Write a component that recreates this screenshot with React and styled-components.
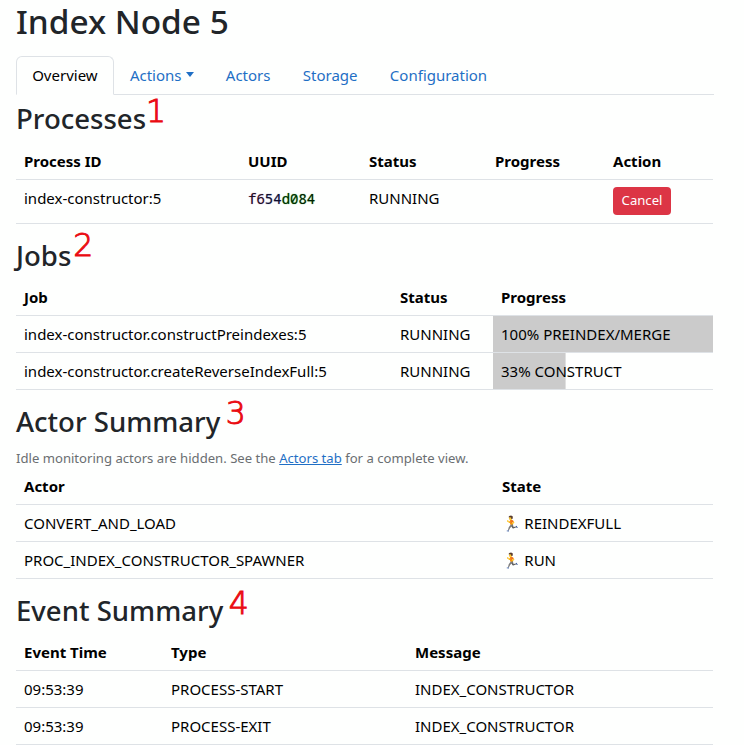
import React from "react";
import styled, { createGlobalStyle } from "styled-components";

const GlobalStyle = createGlobalStyle`
  * { box-sizing: border-box; }
  body {
    margin: 0;
    background: #fefffe;
    color: #212529;
    font-family: "Noto Sans", sans-serif;
    font-size: 15px;
    line-height: 20px;
    overflow: hidden;
  }
`;

const Page = styled.main`
  width: 714px;
  height: 745px;
  padding-left: 16px;
`;

const Title = styled.h1`
  margin: 0;
  height: 56px;
  padding-top: 1px;
  font-size: 33.4px;
  line-height: 40px;
  font-weight: 480;
`;

const Tabs = styled.nav`
  display: flex;
  height: 39px;
  border-bottom: 1px solid #dee2e6;
`;

const Tab = styled.a`
  display: flex;
  align-items: center;
  height: 39px;
  padding: 0 15.17px 2px;
  border: 1px solid ${(p) => (p.$active ? "#dee2e6" : "transparent")};
  border-bottom-color: ${(p) => (p.$active ? "#fefffe" : "transparent")};
  border-radius: 6px 6px 0 0;
  background: ${(p) => (p.$active ? "#fefffe" : "transparent")};
  color: ${(p) => (p.$active ? "#000" : "#1f6fc5")};
  text-decoration: none;
`;

const Caret = styled.span`
  margin-left: 4px;
  border: 4.5px solid transparent;
  border-top: 5px solid currentColor;
  border-bottom: 0;
`;

const Heading = styled.h2`
  display: flex;
  align-items: baseline;
  margin: 0;
  height: ${(p) => p.$height}px;
  padding-top: ${(p) => p.$top}px;
  font-size: 27.55px;
  line-height: 34px;
  font-weight: 500;
`;

const Marker = styled.span`
  margin-left: ${(p) => p.$gap}px;
  position: relative;
  top: -${(p) => p.$rise}px;
  color: #ea0c12;
  font-family: "DejaVu Sans", sans-serif;
  font-size: 31.5px;
  font-weight: 200;
  -webkit-text-stroke: 1px #ea0c12;
`;

const Note = styled.p`
  margin: 0;
  height: 20px;
  color: #6a6e71;
  font-size: 13.12px;
`;

const Link = styled.a`
  color: #1f6fc5;
  text-decoration: underline;
`;

const Table = styled.div`
  width: 697px;
  color: #000;
`;

const Row = styled.div`
  display: grid;
  grid-template-columns: ${(p) => p.$columns};
  height: ${(p) => p.$height || 37}px;
  border-bottom: 1px solid #dee2e6;
  font-weight: ${(p) => (p.$head ? 700 : 400)};
`;

const Cell = styled.div`
  padding: 8px 8px 0;
  white-space: nowrap;
`;

const StateIcon = styled.span`
  margin-right: -0.6px;
`;

const ProgressCell = styled(Cell)`
  background: linear-gradient(#cbcbcb, #cbcbcb) no-repeat 0 0 / ${(p) => p.$value}% 100%;
`;

const Uuid = styled.code`
  font-family: "Noto Sans Mono", "DejaVu Sans Mono", monospace;
  font-size: 14px;
`;

const UuidPart = styled.span`
  color: ${(p) => p.$color};
  text-shadow: 0 0 1px ${(p) => p.$glow};
`;

const CancelButton = styled.button`
  display: block;
  width: 58px;
  height: 28px;
  margin-top: -1px;
  padding: 0 0 1px;
  border: 0;
  border-radius: 4px;
  background: #dc3545;
  color: #fff;
  font: 13.12px/27px "Noto Sans", sans-serif;
`;

const processColumns = "224px 121px 126px 118px 108px";
const jobColumns = "376px 101px 220px";
const actorColumns = "478px 219px";
const eventColumns = "147px 244px 306px";

const HeadRow = ({ columns, labels }) => (
  <Row $columns={columns} $head>
    {labels.map((label) => (
      <Cell key={label}>{label}</Cell>
    ))}
  </Row>
);

const jobs = [
  ["index-constructor.constructPreindexes:5", 100, "PREINDEX/MERGE"],
  ["index-constructor.createReverseIndexFull:5", 33, "CONSTRUCT"],
];
const actors = [
  ["CONVERT_AND_LOAD", "REINDEXFULL"],
  ["PROC_INDEX_CONSTRUCTOR_SPAWNER", "RUN"],
];
const events = ["PROCESS-START", "PROCESS-EXIT"];

export default function App() {
  return (
    <Page>
      <GlobalStyle />
      <Title>Index Node 5</Title>
      <Tabs>
        <Tab $active>Overview</Tab>
        <Tab>Actions<Caret /></Tab>
        <Tab>Actors</Tab>
        <Tab>Storage</Tab>
        <Tab>Configuration</Tab>
      </Tabs>

      <Heading $height={48} $top={6}>Processes<Marker $gap={0} $rise={7}>1</Marker></Heading>
      <Table>
        <HeadRow columns={processColumns} labels={["Process ID", "UUID", "Status", "Progress", "Action"]} />
        <Row $columns={processColumns} $height={44}>
          <Cell>index-constructor:5</Cell>
          <Cell>
            <Uuid>
              <UuidPart $color="#201020" $glow="#b060b0">f6</UuidPart>
              <UuidPart $color="#101030" $glow="#7070b0">54</UuidPart>
              <UuidPart $color="#003000" $glow="#40a040">d0</UuidPart>
              <UuidPart $color="#002000" $glow="#40a040">84</UuidPart>
            </Uuid>
          </Cell>
          <Cell>RUNNING</Cell>
          <Cell />
          <Cell><CancelButton>Cancel</CancelButton></Cell>
        </Row>
      </Table>

      <Heading $height={55} $top={14}>Jobs<Marker $gap={2} $rise={10}>2</Marker></Heading>
      <Table>
        <HeadRow columns={jobColumns} labels={["Job", "Status", "Progress"]} />
        {jobs.map(([name, value, stage]) => (
          <Row key={name} $columns={jobColumns}>
            <Cell>{name}</Cell>
            <Cell>RUNNING</Cell>
            <ProgressCell $value={value}>{value}% {stage}</ProgressCell>
          </Row>
        ))}
      </Table>

      <Heading $height={58} $top={14}>Actor Summary<Marker $gap={5.5} $rise={8}>3</Marker></Heading>
      <Note>
        Idle monitoring actors are hidden. See the <Link>Actors tab</Link> for a complete view.
      </Note>
      <Table>
        <HeadRow columns={actorColumns} labels={["Actor", "State"]} />
        {actors.map(([name, state]) => (
          <Row key={name} $columns={actorColumns}>
            <Cell>{name}</Cell>
            <Cell><StateIcon>🏃</StateIcon> {state}</Cell>
          </Row>
        ))}
      </Table>

      <Heading $height={55} $top={14}>Event Summary<Marker $gap={5.5} $rise={7}>4</Marker></Heading>
      <Table>
        <HeadRow columns={eventColumns} labels={["Event Time", "Type", "Message"]} />
        {events.map((type) => (
          <Row key={type} $columns={eventColumns}>
            <Cell>09:53:39</Cell>
            <Cell>{type}</Cell>
            <Cell>INDEX_CONSTRUCTOR</Cell>
          </Row>
        ))}
      </Table>
    </Page>
  );
}
